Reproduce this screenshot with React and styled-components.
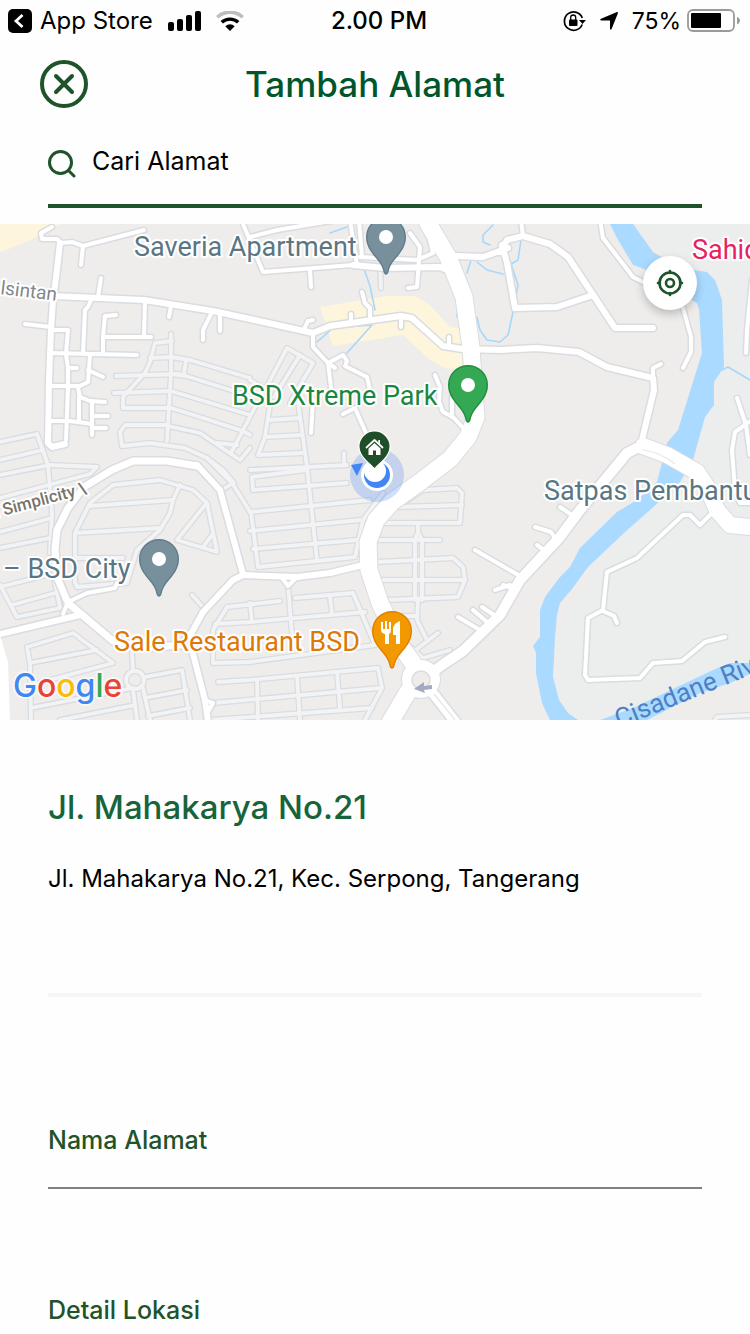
import React from "react";
import styled, { createGlobalStyle } from "styled-components";

const GlobalStyle = createGlobalStyle`
  *, *::before, *::after { box-sizing: border-box; }
  body {
    margin: 0;
    background: #fefefe;
    color: #000;
    font-family: Inter, Roboto, "Liberation Sans", sans-serif;
  }
`;

const green = "#1f5329";

const Screen = styled.div`
  display: flex;
  flex-direction: column;
  height: 100vh;
  overflow: hidden;
  background: #fefefe;
`;

const StatusBar = styled.div`
  display: grid;
  grid-template-columns: 1fr auto 1fr;
  align-items: center;
  flex: none;
  height: 40px;
  padding: 2px 0 0 8px;
  font-size: 24px;
  line-height: 38px;
`;

const StatusGroup = styled.div`
  display: flex;
  align-items: center;
  justify-content: ${(p) => (p.$end ? "flex-end" : "flex-start")};
  gap: ${(p) => p.$gap}px;
  padding-right: ${(p) => (p.$end ? 10 : 0)}px;
`;

const BackLink = styled.a`
  display: flex;
  align-items: center;
  gap: 8px;
  color: inherit;
  text-decoration: none;
`;

const Clock = styled.time`
  font-size: 24px;
  font-weight: 500;
`;

const Battery = styled.span`
  display: flex;
  align-items: center;
  gap: 6px;
  font-size: 23px;
`;

const Header = styled.header`
  display: grid;
  grid-template-columns: 48px 1fr 48px;
  align-items: center;
  flex: none;
  height: 88px;
  padding: 0 40px;
`;

const IconButton = styled.button`
  display: grid;
  place-items: center;
  width: 48px;
  height: 48px;
  padding: 0;
  border: 0;
  border-radius: 50%;
  background: transparent;
  cursor: pointer;
`;

const Title = styled.h1`
  margin: 0;
  color: #00562b;
  font-size: 35px;
  font-weight: 500;
  line-height: 48px;
  text-align: center;
`;

const SearchField = styled.label`
  display: flex;
  align-items: center;
  flex: none;
  gap: 16px;
  height: 80px;
  margin: 0 48px 16px;
  padding-bottom: 4px;
  border-bottom: 4px solid ${green};
`;

const SearchInput = styled.input`
  flex: 1;
  min-width: 0;
  height: 40px;
  padding: 0 0 6px;
  border: 0;
  outline: 0;
  background: transparent;
  color: #000;
  font: inherit;
  font-size: 25px;
  &::placeholder { color: #000; opacity: 1; }
`;

const MapFrame = styled.section`
  position: relative;
  flex: none;
  overflow: hidden;
`;

const MapDrawing = styled.svg`
  display: block;
  width: 100%;
  height: auto;
  background: #efedeb;
`;

const LocateButton = styled(IconButton)`
  position: absolute;
  top: 32px;
  right: 53px;
  width: 54px;
  height: 54px;
  background: #fff;
  box-shadow: 0 4px 10px rgba(0, 0, 0, 0.22);
`;

const Details = styled.main`
  flex: 1;
  min-height: 0;
  padding: 63px 48px;
  overflow-y: auto;
  scrollbar-width: none;
`;

const Summary = styled.section`
  height: 214px;
  border-bottom: 4px solid #f6f6f6;
`;

const Street = styled.h2`
  margin: 0 0 24px;
  color: #17643a;
  font-size: 33px;
  font-weight: 500;
  line-height: 48px;
`;

const Address = styled.p`
  margin: 0;
  font-size: 24px;
  line-height: 48px;
`;

const Form = styled.form`
  display: flex;
  flex-direction: column;
  gap: 103px;
  padding-top: 125px;
`;

const Field = styled.label`
  display: block;
  color: ${green};
  font-size: 25px;
  font-weight: 500;
  line-height: 36px;
`;

const FieldInput = styled.input`
  display: block;
  width: 100%;
  height: 31px;
  padding: 0;
  border: 0;
  border-bottom: 2px solid #808080;
  outline: 0;
  background: transparent;
  font: inherit;
`;

const MapText = styled.text`
  font-family: ${(p) => p.$family || 'Roboto, "Liberation Sans", sans-serif'};
  font-size: ${(p) => p.$size || 27}px;
  font-weight: ${(p) => p.$weight || 400};
  fill: ${(p) => p.$color};
  stroke: ${(p) => p.$halo || "#fff"};
  stroke-width: ${(p) => (p.$halo === "none" ? 0 : 4)}px;
  stroke-linejoin: round;
  paint-order: stroke;
`;

/* Each list holds the polylines of one class of road. */
const lanes = [
  "171,334 171,373 167,441", "172,341 155,343 150,362 145,373", "116,376 180,374",
  "114,393 171,391", "145,373 123,397 123,408 168,408", "150,358 171,357 190,360 250,378",
  "171,374 186,376 250,396", "171,391 250,415", "168,407 203,418 243,431 250,435",
  "186,360 184,374", "168,426 200,433 240,460 250,448", "122,446 120,432 125,425 168,425",
  "122,446 150,443 185,448 207,458 223,470 234,483", "256,405 242,432 231,453", "217,443 237,445",
  "0,442 37,434 48,465 52,513 50,553", "0,460 43,450", "0,475 50,465 97,467 90,474 0,498",
  "0,532 52,518", "0,548 50,538", "0,587 55,573", "12,605 55,593", "0,585 17,617 60,608 53,573",
  "78,587 75,583 75,533 90,503 113,485 160,480 193,490 207,503 217,552 177,540 205,505",
  "90,506 173,500", "75,533 160,528", "180,485 173,500 170,513 160,530 137,550 127,583 77,587",
  "75,558 123,558", "203,547 212,535", "192,595 203,607",
  "207,458 232,483 244,502 250,512", "222,490 233,483",
  "31,720 30,663 27,647 73,633 113,663 31,685", "30,663 97,650", "31,708 133,688", "60,720 135,705",
  "132,653 133,670", "133,690 137,720", "145,677 182,670 190,720", "145,698 187,690",
  "143,688 150,720", "148,716 190,708",
  "213,663 213,630 227,607 280,601", "215,624 250,622 365,612", "295,598 353,593 375,645 250,662 213,663",
  "250,603 252,622", "330,597 332,614", "288,585 292,635", "218,682 250,680 378,668 382,688 365,720",
  "213,703 380,688", "210,720 372,708", "257,680 258,720", "297,677 300,720", "337,672 340,708",
  "270,405 265,437 258,455 302,453", "298,402 307,467 317,560", "270,420 300,418", "265,437 302,435",
  "250,470 347,465", "253,490 347,483", "253,490 252,477 305,470", "250,512 370,500",
  "250,531 360,520", "253,549 357,540", "251,512 258,567 355,557 363,520 383,493",
  "344,453 344,465", "265,390 287,348 313,363 290,403", "274,397 300,355", "250,380 263,388",
  "383,523 460,523 462,493 457,488 423,490 397,507 462,505", "378,540 440,540",
  "418,523 418,532 415,540 415,600", "418,532 422,540 422,600", "378,562 453,558 463,567 465,580 458,597 387,600",
  "380,580 465,580", "418,600 417,620 427,640", "400,616 417,616", "413,652 438,633",
  "408,645 423,658 450,650", "380,266 381,288", "715,720 717,717 750,715",
];

const streets = [
  "52,227 41,233 42,239 57,239 61,243 72,242 83,246 144,230", "83,246 81,265", "101,278 98,297",
  "25,324 51,327", "54,330 68,330 66,354 68,368 68,388 66,440", "91,300 88,307 85,310 83,353",
  "116,315 105,316 103,337 103,353", "103,337 151,337", "145,301 144,336", "50,353 137,355",
  "90,355 88,382 80,386 50,386", "88,370 103,377", "68,368 77,368", "78,388 80,397 90,401 105,402",
  "79,397 79,422", "50,421 70,421 92,424", "92,401 92,435", "92,416 108,416", "92,428 106,428",
  "171,306 169,317", "212,312 203,330 203,340", "220,313 220,331",
  "313,334 313,347 328,363 331,387 331,402", "328,363 335,368", "313,400 311,433",
  "328,363 343,355 347,361 345,366 367,377 370,390", "343,414 355,408 366,433",
  "305,327 308,321 313,320", "351,314 351,321", "362,292 365,303 370,308 370,317", "401,317 401,327",
  "449,337 449,347", "243,224 263,272 353,265", "250,237 277,230 337,220", "310,271 311,287",
  "350,220 353,240 357,265", "359,220 362,257", "410,233 420,247 417,287 408,288",
  "360,257 417,260 433,253 427,227", "435,375 440,387 439,402 443,412 453,417 465,430", "452,397 452,417",
  "475,550 520,576", "458,617 480,630", "473,610 487,622", "482,607 497,617", "495,590 510,585",
  "560,507 572,515", "535,527 551,532 555,538", "537,545 544,550", "503,585 512,588",
  "521,220 523,236", "600,220 603,238 633,277 643,282", "683,308 691,337 691,352 683,368",
  "752,280 747,330 746,353", "737,398 746,425 750,455", "752,420 735,432 732,450 735,490 740,503 752,503",
  "710,515 700,525 690,515 683,515 637,558 607,572 603,610 588,618 585,675 588,680 640,678 653,663 682,661 705,642 725,637",
  "603,611 614,616 617,623", "653,378 653,368 661,364", "63,614 68,602 87,593 115,588 117,583",
  "282,578 288,586 296,578", "205,700 213,703 208,712",
];

const avenues = [
  "60,243 56,278 53,300 51,330 49,380 48,443 52,447 65,444", "53,296 144,300 213,311 250,319 313,333 330,326 401,316 412,318 443,346 463,349 500,350 537,348 579,352 607,367 653,378 654,390 642,440",
  "353,265 385,268 440,267 452,272", "457,256 483,257 508,248", "515,308 557,307 593,295",
  "500,252 507,240 523,236 550,244 568,257 615,328 653,328", "502,245 507,263 515,308",
  "0,634 80,615", "243,575 297,577 330,573 367,564", "192,650 205,700 208,722",
  "197,465 220,490 243,574",
  "180,645 192,632 203,612 233,580 243,575",
];

const ring = ["197,466 167,461 133,461 112,470 84,487 68,508 57,530 55,550 57,577 68,603 113,641 145,648 180,645"];

const highways = [
  "424,215 429,225 448,257 464,297 471,348 473,377 476,417 468,437 450,459 420,482 392,502 376,520 368,542 369,570 380,603 400,645 413,663",
  "409,690 389,724",
];

const crossRoads = [
  "430,674 445,663 463,651 500,615 520,580 560,537 580,510 613,470 627,453 643,445 667,454 697,472",
  "432,692 457,724",
];

const eastRoad = ["643,446 667,455 697,472 707,487 717,510 730,525 760,528"];

const streams = [
  "521,240 518,260 511,264 518,285 513,312 508,335 500,342 487,340 480,330 477,317",
  "471,260 467,273", "477,262 487,270 503,274", "493,225 483,235 483,242 490,245",
  "363,266 370,286 375,310", "317,342 333,328 372,325 347,353", "330,233 347,227",
  "458,305 457,317", "722,370 728,367 750,380", "506,259 512,264",
];

const roads = [
  { name: "streets", lines: streets, outer: 7, inner: 4 },
  { name: "avenues", lines: avenues, outer: 9, inner: 6 },
  { name: "ring", lines: ring, outer: 10, inner: 7 },
  { name: "cross", lines: crossRoads, outer: 13, inner: 10 },
  { name: "east", lines: eastRoad, outer: 18, inner: 16 },
  { name: "highways", lines: highways, outer: 19, inner: 17 },
];

function Lines({ lines, width, color }) {
  return (
    <g fill="none" stroke={color} strokeWidth={width} strokeLinecap="round" strokeLinejoin="round">
      {lines.map((points) => (
        <polyline key={points} points={points} />
      ))}
    </g>
  );
}

function Pin({ x, y, fill, edge, children }) {
  return (
    <g transform={`translate(${x} ${y})`}>
      <path
        d="M0 37C-1.6 37-1.8 35-2.4 32.500C-4.500 24-11 20.500-15 13.500C-18 9-19.300 5-19.300 0A19.300 19.300 0 0 1 19.300 0C19.300 5 18 9 15 13.500C11 20.500 4.500 24 2.400 32.500C1.800 35 1.600 37 0 37Z"
        fill={fill}
        stroke={edge}
        strokeWidth="1.400"
      />
      {children || <circle r="7" fill="#fff" />}
    </g>
  );
}

function AreaMap() {
  return (
    <MapDrawing viewBox="0 224 750 496" role="img" aria-label="Peta BSD City">
      <path d="M633 224H750V663L713 675L600 720H560L550 640L620 530L700 460L715 300Z" fill="#ebeeed" />
      <path d="M0 224H61L45 232Q22 245 0 252Z" fill="#fdf5dc" />
      <path d="M320 307L387 296L415 296L430 305L450 327L461 328L463 368L447 369L430 360L403 335L333 346Z" fill="#fdf5dc" />
      <g fill="#aadaff">
        <path d="M610 224H633L653 252L680 268L707 272L715 280L722 300L724 367L714 382V405L705 417L693 460L680 482L650 510L625 532L588 567L572 589L560 603L557 615L555 637L553 677L559 700L568 713L578 720H550L542 703L536 673V653L533 646L540 637V610L545 597L560 577L570 567L580 548L617 512L637 500L657 482L667 443L678 430L702 353L699 310L697 303L675 290L647 270L633 265L617 238Z" />
        <path d="M600 720L633 708L713 670L730 663H750V674L730 683L700 693L647 720Z" />
      </g>
      <Lines lines={streams} width={1.6} color="#a6d7fc" />

      <Lines lines={lanes} width={6.4} color="#dadce0" />
      <circle cx="135" cy="680" r="9" fill="none" stroke="#dadce0" strokeWidth="6.400" />
      <Lines lines={lanes} width={3.8} color="#f1f3f5" />
      <circle cx="135" cy="680" r="9" fill="none" stroke="#f1f3f5" strokeWidth="3.800" />

      {roads.map((r) => (
        <Lines key={r.name} lines={r.lines} width={r.outer} color="#dadce0" />
      ))}
      <circle cx="421" cy="679" r="20" fill="#dadce0" />
      {roads.map((r) => (
        <Lines key={r.name} lines={r.lines} width={r.inner} color="#fff" />
      ))}
      <circle cx="421" cy="679" r="19" fill="#fff" />
      <circle cx="421" cy="680" r="9" fill="#efedeb" stroke="#dadce0" strokeWidth="1.500" />
      <path d="M434 694L456 721M643 450Q660 452 675 464" fill="none" stroke="#e3e5e8" strokeWidth="1.200" />
      <path d="M414 689L424 682V686L432 685V689L424 690L425 693Z" fill="#a5aac4" />
      <path d="M0 635L8 662L10 720H0Z" fill="#fff" />

      <MapText x="134" y="256" $color="#5b7683">Saveria Apartment</MapText>
      <MapText x="692" y="259" $color="#e91e63">Sahid</MapText>
      <MapText x="232" y="405" $color="#1b873e">BSD Xtreme Park</MapText>
      <MapText x="544" y="500" $color="#5b7683">Satpas Pembantu</MapText>
      <MapText x="3" y="578" $color="#5b7683">– BSD City</MapText>
      <MapText x="114" y="651" $color="#dc7908">Sale Restaurant BSD</MapText>
      <MapText x="0" y="294" transform="rotate(7 0 294)" $size={19} $color="#80868b">lsintan</MapText>
      <MapText x="-9" y="519" transform="rotate(-15 -9 519)" $size={17} $weight={500} $color="#77746b">n Simplicity \</MapText>
      <MapText x="619" y="728" transform="rotate(-22 619 728)" $size={26} $halo="none" $color="#4d80c5">Cisadane River</MapText>

      <Pin x={386} y={237} fill="#78909c" edge="#5f7d8b" />
      <Pin x={159} y={559} fill="#78909c" edge="#5f7d8b" />
      <Pin x={468} y={385} fill="#34a853" edge="#1e8e3e" />
      <Pin x={392} y={631} fill="#f29900" edge="#e37f00">
        <g fill="#fff">
          <path d="M-11-9H-9V-2H-7V-10H-5V-2H-3V-9H-1V-1Q-1 2-3 3V13H-7V3Q-11 2-11-1Z" />
          <path d="M8-10V13H4V4H1V-3Q2-8 8-10Z" />
        </g>
      </Pin>

      <circle cx="377" cy="475" r="27" fill="#4285f4" fillOpacity=".25" />
      <path d="M351 465L363 463L357 476Z" fill="#4285f4" />
      <circle cx="377" cy="475" r="16" fill="#fff" />
      <circle cx="377" cy="475" r="13" fill="#4285f4" />
      <circle cx="375" cy="471" r="11" fill="#fff" />
      <path
        d="M374.500 468C370 463 359.500 456 359.500 446.500A15 15 0 0 1 389.500 446.500C389.500 456 379 463 374.500 468Z"
        fill="#1e4f28"
        stroke="#fff"
        strokeWidth="2.400"
        paintOrder="stroke"
      />
      <path d="M366.500 447.500L374.500 440L382.500 447.500" fill="none" stroke="#fff" strokeWidth="1.800" strokeLinecap="round" strokeLinejoin="round" />
      <path d="M378.300 440H380V445.500L378.300 444ZM368.500 448.500L374.500 443L380.500 448.500V455H376V450.500H373V455H368.500Z" fill="#fff" />

      <MapText x="13" y="697" $size={32} $weight={500} $family='Inter, "Liberation Sans", sans-serif' $halo="#f7f7f7" $color="#4285f4">
        G<tspan fill="#ea4335">o</tspan><tspan fill="#fbbc05">o</tspan>g<tspan fill="#34a853">l</tspan><tspan fill="#ea4335">e</tspan>
      </MapText>
    </MapDrawing>
  );
}

export default function App() {
  return (
    <>
      <GlobalStyle />
      <Screen>
        <StatusBar>
          <StatusGroup $gap={15}>
            <BackLink href="#app-store">
              <svg width="24" height="24" viewBox="0 0 24 24" aria-hidden="true">
                <rect width="24" height="24" rx="5" />
                <path d="M14.500 6L8 12L14.500 18" fill="none" stroke="#fff" strokeWidth="2.800" />
              </svg>
              App Store
            </BackLink>
            <svg width="33" height="20" viewBox="0 0 33 20" aria-hidden="true">
              <rect y="11" width="6" height="9" rx="2" />
              <rect x="9" y="8" width="6" height="12" rx="2" />
              <rect x="18" y="4" width="6" height="16" rx="2" />
              <rect x="27" width="6" height="20" rx="2" />
            </svg>
            <svg width="28" height="20" viewBox="0 0 28 20" fill="none" aria-hidden="true">
              <path d="M1.300 6.300C8.300-.5 19.700-.5 26.700 6.300" stroke="#bdbdbd" strokeWidth="3.600" />
              <path d="M5.800 11.300C10.300 7 17.700 7 22.200 11.300" stroke="#000" strokeWidth="3.400" />
              <path d="M14 20L9.300 15.300Q14 11.300 18.700 15.300Z" fill="#000" />
            </svg>
          </StatusGroup>
          <Clock>2.00 PM</Clock>
          <StatusGroup $gap={14} $end>
            <svg width="23" height="22" viewBox="0 0 23 22" aria-hidden="true">
              <path d="M19.200 14.500A9.200 9.200 0 1 1 19.300 8" fill="none" stroke="#000" strokeWidth="1.700" />
              <path d="M16 10H23L19.500 14Z" />
              <rect x="6" y="9.500" width="8.500" height="6.500" rx="1" />
              <path d="M7.700 10V7.500A2.500 2.500 0 0 1 12.700 7.500V10" fill="none" stroke="#000" strokeWidth="1.300" />
            </svg>
            <svg width="18" height="18" viewBox="0 0 18 18" aria-hidden="true">
              <path d="M17 0Q18.400 0 17.800 1.400L11.700 16.800Q10.400 19 10 16.500V8.600H1.500Q-.8 8 1 6.800Z" />
            </svg>
            <Battery>
              75%
              <svg width="53" height="24" viewBox="0 0 53 24" aria-hidden="true">
                <rect x="1" y="1" width="46" height="21" rx="5" fill="none" stroke="#9a9a9a" strokeWidth="1.800" />
                <rect x="4" y="4" width="30" height="15" rx="1" />
                <path d="M50 8Q53 9 53 11.500Q53 14 50 15.500Z" fill="#9a9a9a" />
              </svg>
            </Battery>
          </StatusGroup>
        </StatusBar>

        <Header>
          <IconButton type="button" aria-label="Tutup">
            <svg width="48" height="48" viewBox="0 0 48 48" fill="none" stroke={green} strokeWidth="4" strokeLinecap="round">
              <circle cx="24" cy="24" r="22" />
              <path d="M16 16L32 32M32 16L16 32" />
            </svg>
          </IconButton>
          <Title>Tambah Alamat</Title>
        </Header>

        <SearchField>
          <svg width="28" height="28" viewBox="0 0 28 28" fill="none" stroke={green} strokeWidth="3" strokeLinecap="round" aria-hidden="true">
            <circle cx="12.500" cy="12.500" r="11" />
            <path d="M20.500 20.500L26 26" />
          </svg>
          <SearchInput type="search" placeholder="Cari Alamat" aria-label="Cari Alamat" />
        </SearchField>

        <MapFrame>
          <AreaMap />
          <LocateButton type="button" aria-label="Lokasi saya">
            <svg width="28" height="28" viewBox="0 0 28 28" fill="none" stroke={green} strokeWidth="2.600" strokeLinecap="round">
              <circle cx="14" cy="14" r="10.500" />
              <circle cx="14" cy="14" r="4" />
              <path d="M14 2V4M14 24V26M2 14H4M24 14H26" />
            </svg>
          </LocateButton>
        </MapFrame>

        <Details>
          <Summary>
            <Street>Jl. Mahakarya No.21</Street>
            <Address>Jl. Mahakarya No.21, Kec. Serpong, Tangerang</Address>
          </Summary>
          <Form>
            <Field>
              Nama Alamat
              <FieldInput type="text" name="nama" />
            </Field>
            <Field>
              Detail Lokasi
              <FieldInput type="text" name="detail" />
            </Field>
          </Form>
        </Details>
      </Screen>
    </>
  );
}
